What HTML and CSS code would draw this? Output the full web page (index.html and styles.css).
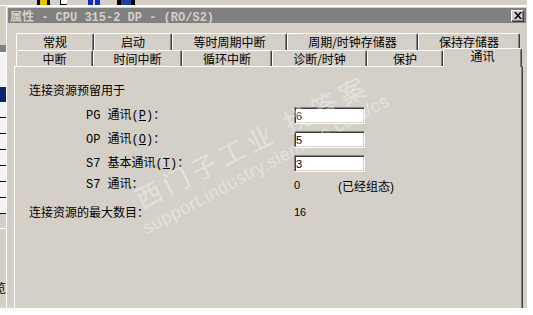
FILE: index.html
```html
<!DOCTYPE html>
<html lang="zh-CN">
<head>
    <meta charset="UTF-8">
    <title>属性 - CPU 315-2 DP</title>
    <link rel="stylesheet" href="styles.css">
</head>
<body>

<div class="screen">
    <!-- toolbar of the main window behind the dialog -->
    <div class="toolbar">
        <span class="tb-icon tb-open"></span>
        <span class="tb-icon tb-page"></span>
        <span class="tb-icon tb-net"></span>
        <span class="tb-icon tb-help"></span>
    </div>

    <div class="desk">
        <!-- list of the station window, mostly hidden -->
        <div class="sidelist">
            <div class="sl-gap"></div>
            <div class="sl-head"></div>
            <div class="sl-pad"></div>
            <div class="sl-selected"></div>
            <div class="sl-row"></div>
            <div class="sl-row"></div>
            <div class="sl-row"></div>
            <div class="sl-row"></div>
            <div class="sl-row"></div>
            <div class="sl-row"></div>
            <div class="sl-row"></div>
            <div class="sl-foot"><span class="sl-char">览</span></div>
        </div>

        <div class="dialog">
            <div class="titlebar">
                <span class="title">属性 - CPU 315-2 DP - (RO/S2)</span>
                <button class="close" type="button">
                    <svg width="8" height="7" viewBox="0 0 8 7"><path d="M0 0h2l2 2.5L6 0h2L5 3.5 8 7H6L4 4.5 2 7H0l3-3.5z" fill="#000"/></svg>
                </button>
            </div>

            <div class="tabs">
                <div class="tabrow tabrow-back">
                    <div class="tab t-general">常规</div>
                    <div class="tab t-startup">启动</div>
                    <div class="tab t-sync">等时周期中断</div>
                    <div class="tab t-clock">周期/时钟存储器</div>
                    <div class="tab t-retentive">保持存储器</div>
                </div>
                <div class="tabrow tabrow-front">
                    <div class="tab t-interrupt">中断</div>
                    <div class="tab t-tod">时间中断</div>
                    <div class="tab t-cyclic">循环中断</div>
                    <div class="tab t-diag">诊断/时钟</div>
                    <div class="tab t-protect">保护</div>
                    <div class="tab t-comm is-active">通讯</div>
                </div>
            </div>

            <div class="panel">
                <p class="heading">连接资源预留用于</p>
                <div class="fields">
                    <div class="field">
                        <span class="label">PG 通讯(<u>P</u>)：</span>
                        <input class="count" type="text" value="6">
                    </div>
                    <div class="field">
                        <span class="label">OP 通讯(<u>O</u>)：</span>
                        <input class="count" type="text" value="5">
                    </div>
                    <div class="field">
                        <span class="label">S7 基本通讯(<u>T</u>)：</span>
                        <input class="count" type="text" value="3">
                    </div>
                    <div class="field field-text">
                        <span class="label">S7 通讯：</span>
                        <span class="num">0</span>
                        <span class="note">(已经组态)</span>
                    </div>
                </div>
                <div class="field field-text total">
                    <span class="label">连接资源的最大数目：</span>
                    <span class="num">16</span>
                </div>

                <!-- forum watermark lying over the page -->
                <span class="wm wm-name">西门子工业 找答案</span>
                <span class="wm wm-url">support.industry.siemens.com/cs</span>
            </div>
        </div>
    </div>
</div>

</body>
</html>
```

FILE: styles.css
```css
body {
    margin: 0;
    background: #fff;
    color: #000;
    font: 12px "Noto Sans CJK SC", sans-serif;
}
.screen {
    width: 527px;
    height: 308px;
    overflow: hidden;
    background: #d4d0c8;
}

/* toolbar behind */
.toolbar {
    height: 5px;
    display: flex;
    align-items: flex-start;
    border-bottom: 1px solid #fff;
    background: #d4d0c8;
}
.tb-icon {
    height: 5px;
}
.tb-open {
    width: 13px;
    margin-left: 37px;
    background: linear-gradient(90deg, #000 0 3px, #e8c000 3px 10px, #000 10px);
}
.tb-page {
    width: 7px;
    margin-left: 10px;
    background: #fff;
    box-shadow: inset 0 -1px #000, inset 1px 0 #000;
}
.tb-net {
    width: 12px;
    margin-left: 21px;
    background: linear-gradient(90deg, #1030c0 0 5px, #d4d0c8 5px 7px, #1030c0 7px);
}
.tb-help {
    width: 18px;
    margin-left: 17px;
    background: linear-gradient(90deg, #000 0 4px, #2040a0 4px 14px, #000 14px);
}

.desk {
    display: flex;
    height: 302px;
}

/* side list */
.sidelist {
    width: 6px;
    display: flex;
    flex-direction: column;
    background: #d4d0c8;
}
.sl-gap {
    height: 39px;
}
.sl-head {
    height: 7px;
    background: #808080;
    border-bottom: 2px solid #fff;
}
.sl-pad {
    height: 33px;
    background: #f4f4f4;
}
.sl-selected {
    height: 15px;
    background: #0a246a;
}
.sl-row {
    height: 15px;
    background: #f4f4f4;
    border-bottom: 1px solid #000;
}
.sl-foot {
    flex: 1;
    border-top: 1px solid #fff;
    margin-top: 14px;
    overflow: hidden;
}
.sl-char {
    display: block;
    width: 6px;
    overflow: hidden;
    margin-top: 52px;
    font-size: 12px;
    line-height: 14px;
    direction: rtl;
}

/* dialog */
.dialog {
    flex: 1;
    padding: 2px 1px 0 2px;
    box-shadow: inset 1px 1px #fff;
}
.titlebar {
    display: flex;
    align-items: center;
    height: 15px;
    background: #808080;
}
.title {
    padding-left: 2px;
    color: #d4d0c8;
    font: bold 12px "Liberation Mono", "Noto Sans CJK SC", monospace;
    white-space: nowrap;
}
.close {
    display: flex;
    align-items: center;
    justify-content: center;
    box-sizing: border-box;
    width: 13px;
    height: 12px;
    margin: 0 2px 0 auto;
    padding: 0;
    border: 1px solid;
    border-color: #fff #404040 #404040 #fff;
    box-shadow: inset -1px -1px #808080;
    background: #d4d0c8;
}

/* tabs */
.tabs {
    margin: 10px 0 0 6px;
    width: 509px;
}
.tabrow {
    display: flex;
    padding-left: 2px;
}
.tabrow-back {
    height: 17px;
}
.tabrow-front {
    height: 16px;
    align-items: flex-end;
}
.tab {
    box-sizing: border-box;
    height: 100%;
    display: flex;
    align-items: center;
    justify-content: center;
    border: 1px solid #fff;
    border-bottom: 0;
    border-right-color: #404040;
    border-radius: 2px 2px 0 0;
    box-shadow: inset -1px 0 #808080;
    line-height: 14px;
    white-space: nowrap;
}
.t-general { width: 78px; }
.t-startup { width: 78px; }
.t-sync { width: 115px; }
.t-clock { width: 131px; }
.t-retentive { width: 102px; }
.t-interrupt { width: 77px; }
.t-tod { width: 89px; }
.t-cyclic { width: 90px; }
.t-diag { width: 95px; }
.t-protect { width: 76px; }
.t-comm { width: 79px; }
.tab.is-active {
    position: relative;
    z-index: 1;
    height: 19px;
    margin-bottom: -1px;
    padding-top: 1px;
    align-items: flex-start;
    line-height: 12px;
    background: #d4d0c8;
}

/* page */
.panel {
    position: relative;
    box-sizing: border-box;
    width: 509px;
    height: 250px;
    margin-left: 6px;
    border-top: 1px solid #fff;
    border-left: 1px solid #fff;
    border-right: 1px solid #404040;
    box-shadow: inset -1px 0 #808080;
}
.heading {
    margin: 17px 0 0 14px;
    line-height: 12px;
}
.fields {
    margin-top: 11px;
    padding-left: 71px;
}
.field {
    display: flex;
    align-items: center;
    height: 17px;
    margin-bottom: 7px;
}
.field:last-child {
    margin-bottom: 0;
}
.field-text {
    height: 12px;
}
.label {
    width: 208px;
    font-family: "Liberation Mono", "Noto Sans CJK SC", monospace;
    line-height: 12px;
    white-space: nowrap;
}
.total {
    margin: 15px 0 0 14px;
}
.total .label {
    width: 265px;
    font-family: "Noto Sans CJK SC", sans-serif;
}
.count {
    box-sizing: border-box;
    width: 71px;
    height: 17px;
    margin: 0;
    padding: 0 1px;
    border: 1px solid;
    border-color: #808080 #fff #fff #808080;
    box-shadow: inset 1px 1px #404040, inset -1px -1px #d4d0c8;
    background: #fff;
    font: 11px "Liberation Sans", sans-serif;
    outline: none;
}
.num {
    width: 44px;
    font: 11px "Liberation Sans", sans-serif;
}
.note {
    font: 12px "Liberation Sans", "Noto Sans CJK SC", sans-serif;
}

/* watermark */
.wm {
    position: absolute;
    transform-origin: 0 100%;
    color: rgba(255, 255, 255, 0.4);
    white-space: nowrap;
    pointer-events: none;
}
.wm-name {
    left: 129px;
    top: 115px;
    font: 26px/32px "Noto Sans CJK SC", sans-serif;
    letter-spacing: 5px;
    transform: rotate(-27deg);
}
.wm-url {
    left: 134px;
    top: 150px;
    font: 18px/22px "Liberation Sans", sans-serif;
    letter-spacing: 0.5px;
    transform: rotate(-28deg);
}
```
